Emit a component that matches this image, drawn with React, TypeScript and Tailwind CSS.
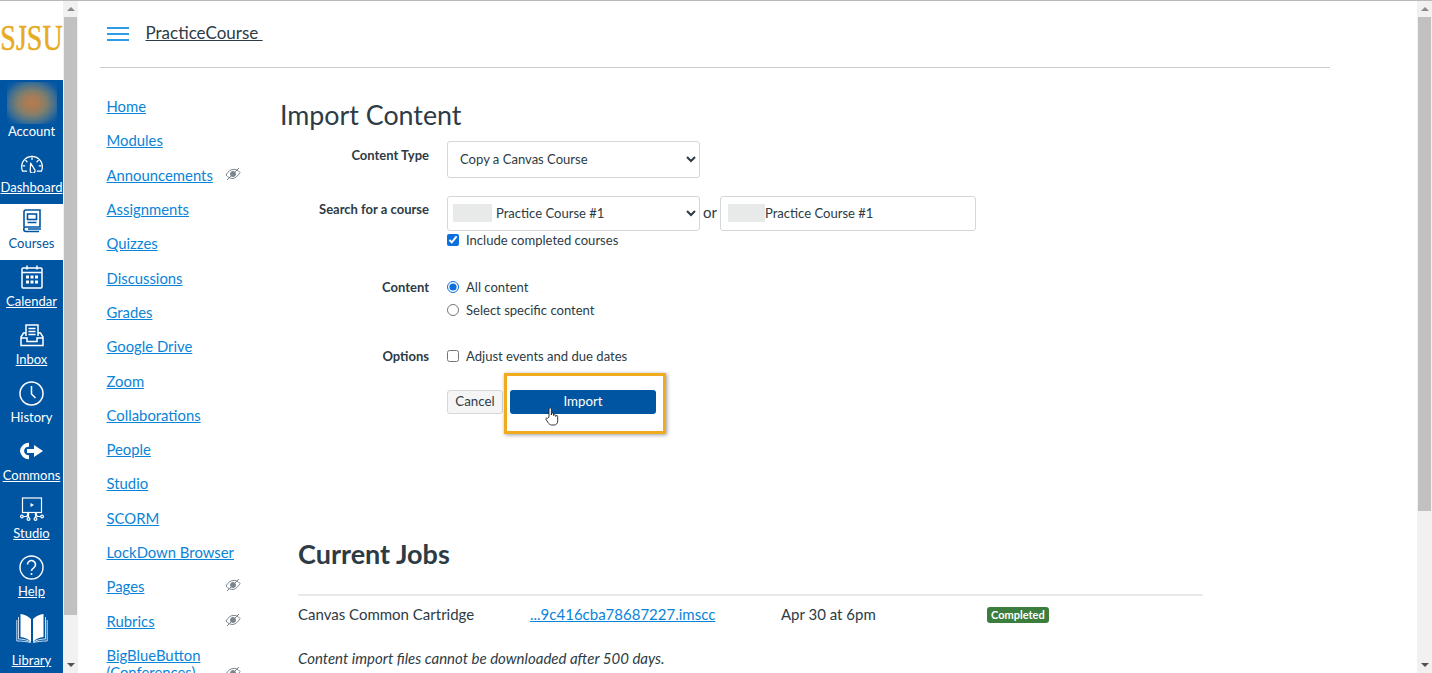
import React from "react";

const white = { stroke: "white", fill: "none", strokeWidth: 1.6, strokeLinecap: "round" as const, strokeLinejoin: "round" as const };

const icons: Record<string, React.ReactNode> = {
  dash: (
    <svg width="24" height="18" viewBox="0 0 26 20" {...white} strokeWidth={1.4}>
      <path d="M7 18H2.5A11 11 0 0 1 1.5 13 11.5 11.5 0 0 1 24.500 13 11 11 0 0 1 23.500 18H19" />
      <path d="M13 3v2M6 6l1.500 1.500M20 6l-1.500 1.500M3 12h2M21 12h2" />
      <path d="M11.500 9l4 6.500a2.700 2.700 0 1 1-4.500 2z" />
    </svg>
  ),
  courses: (
    <svg width="20" height="24" viewBox="0 0 20 24" fill="none" stroke="#0055a2" strokeWidth="1.600">
      <path d="M2 18V3a2 2 0 0 1 2-2h14v17H4a2 2 0 0 0 0 4.500h13" />
      <rect x="5.500" y="5" width="9" height="5.500" />
      <path d="M5.500 13.500h9M6 20h13" />
    </svg>
  ),
  calendar: (
    <svg width="22" height="24" viewBox="0 0 22 24" fill="none" stroke="white" strokeWidth="1.500">
      <rect x="1" y="3" width="20" height="20" rx="1" />
      <path d="M1 7.500h20M6 .5v4M16 .5v4" />
      <path d="M5 10.500h3v3H5zM9.500 10.500h3v3h-3zM14 10.500h3v3h-3zM5 15.500h3v3H5zM9.500 15.500h3v3h-3zM14 15.500h3v3h-3z" fill="white" stroke="none" />
    </svg>
  ),
  inbox: (
    <svg width="24" height="23" viewBox="0 0 24 23" fill="none" stroke="white" strokeWidth="1.500">
      <path d="M6 12V1h12v11" />
      <path d="M8.500 4.500h7M8.500 7.500h7M8.500 10.500h7" />
      <path d="M6 9H3.500L1 13v8.500h22V13l-2.500-4H18" />
      <path d="M1 14h6v3.500h10V14h6" />
    </svg>
  ),
  history: (
    <svg width="25" height="25" viewBox="0 0 25 25" fill="none" stroke="white" strokeWidth="1.500">
      <circle cx="12.500" cy="12.500" r="11.500" />
      <path d="M12.500 5v8l4 4" />
    </svg>
  ),
  commons: (
    <svg width="25" height="18" viewBox="0 0 25 18">
      <path d="M15 9H8" stroke="white" strokeWidth="4" />
      <path d="M10 2.800A7 7 0 0 0 3 9a7 7 0 0 0 7 6.200" stroke="white" strokeWidth="4" fill="none" />
      <path d="M15 3l9 6-9 6z" fill="white" />
    </svg>
  ),
  studio: (
    <svg width="24" height="25" viewBox="0 0 24 25" fill="none" stroke="white" strokeWidth="1.200">
      <rect x="2.500" y="1" width="19" height="14.500" />
      <path d="M10.500 6l3.500 2-3.500 2z" fill="white" stroke="none" />
      <path d="M3.200 19.500H7l1-4M20.800 19.500H17l-1-4M8.500 15.500v5.200M15.500 15.500v5.200" />
      <circle cx="1.900" cy="19.500" r="1.300" />
      <circle cx="22.100" cy="19.500" r="1.300" />
      <circle cx="8.500" cy="22" r="1.400" />
      <circle cx="15.500" cy="22" r="1.400" />
    </svg>
  ),
  help: (
    <svg width="25" height="25" viewBox="0 0 25 25" fill="none" stroke="white" strokeWidth="1.400">
      <circle cx="12.500" cy="12.500" r="11.500" />
      <path d="M8.500 9.500a4 4 0 1 1 6.500 3.200c-1.500 1-2.500 1.800-2.500 3.300" strokeWidth="1.600" />
      <circle cx="12.500" cy="19" r="1" fill="white" stroke="none" />
    </svg>
  ),
  library: (
    <svg width="32" height="30" viewBox="0 0 32 30">
      <path d="M15 6C12 3 8 1.500 4.500 1v23c4 .5 8 2 10.500 5zM17 6c3-3 7-4.500 10.500-5v23c-4 .5-8 2-10.500 5z" fill="white" />
      <path d="M2.500 4v22c4.500 0 9 1 12 3M29.500 4v22c-4.500 0-9 1-12 3M.8 7v21c5 0 10 .5 14 1.500M31.200 7v21c-5 0-10 .5-14 1.500" stroke="white" strokeWidth="0.800" fill="none" />
    </svg>
  ),
};

function NavItem({ icon, label, link, h = "h-[58px]", gap = "mt-[2px]", active }: { icon: string; label: string; link?: boolean; h?: string; gap?: string; active?: boolean }) {
  return (
    <div className={`${h} flex shrink-0 flex-col items-center justify-end pb-[9px] ${active ? "bg-white text-[#0055a2]" : "text-white"}`}>
      <div className="flex h-[28px] items-center justify-center">{icons[icon]}</div>
      <span className={`${gap} text-[13px] leading-[16px] whitespace-nowrap ${link ? "underline" : ""}`}>{label}</span>
    </div>
  );
}

function EyeOff() {
  return (
    <svg width="16" height="14" viewBox="0 0 16 14" fill="none" stroke="#7b858c" strokeWidth="1" className="shrink-0">
      <path d="M1 8c2-3.500 4.500-5.500 7-5.500 2.500-.5 5 .5 7 3-2 3.500-4.500 5.500-7 6-2.500 0-5-1-7-3.500z" />
      <circle cx="8" cy="7" r="2.500" fill="#7b858c" />
      <path d="M2 13L14 1" />
    </svg>
  );
}

function Scrollbar({ thumb }: { thumb: string }) {
  return (
    <div className="flex h-full w-[15px] shrink-0 flex-col items-center bg-[#f1f1f1]">
      <div className="flex h-[16px] w-full items-center justify-center">
        <div className="h-0 w-0 border-x-[4px] border-b-[4px] border-x-transparent border-b-[#8a8a8a]" />
      </div>
      <div className={`${thumb} w-[13px] bg-[#c1c1c1]`} />
      <div className="flex-1" />
      <div className="flex h-[16px] w-full items-center justify-center">
        <div className="h-0 w-0 border-x-[4px] border-t-[4px] border-x-transparent border-t-[#505050]" />
      </div>
    </div>
  );
}

const links: [string, boolean?][] = [
  ["Home"],
  ["Modules"],
  ["Announcements", true],
  ["Assignments"],
  ["Quizzes"],
  ["Discussions"],
  ["Grades"],
  ["Google Drive"],
  ["Zoom"],
  ["Collaborations"],
  ["People"],
  ["Studio"],
  ["SCORM"],
  ["LockDown Browser"],
  ["Pages", true],
  ["Rubrics", true],
  ["BigBlueButton (Conferences)", true],
];

export default function App() {
  return (
    <div className="flex h-[673px] w-[1432px] overflow-hidden border-t border-[#b9b9b9] bg-white font-['Lato','Noto_Sans',sans-serif] text-[#2d3b45]">
      <nav className="flex h-full w-[63px] shrink-0 flex-col overflow-hidden">
        <div className="flex h-[79px] shrink-0 items-center justify-center font-['Liberation_Serif',serif] text-[28px] leading-none text-[#e6ab24]">
          <span className="mb-[3px] scale-y-125 whitespace-nowrap [-webkit-text-stroke:0.4px_#e6ab24]">SJSU</span>
        </div>
        <div className="flex flex-1 flex-col overflow-hidden bg-[#0055a2]">
          <div className="flex h-[66px] shrink-0 flex-col items-center text-white">
            <div className="mt-[2px] h-[42px] w-[50px] bg-[radial-gradient(ellipse_at_center,#b87a50_0%,#a37c5a_22%,#7f7e6c_42%,#3f6f92_66%,#0e5aa3_84%,#0055a2_100%)]" />
            <span className="mt-[-1px] text-[13px] leading-[16px]">Account</span>
          </div>
          <NavItem icon="dash" label="Dashboard" link gap="mt-[1px]" />
          <NavItem icon="courses" label="Courses" active h="h-[56px]" gap="mt-0" />
          <NavItem icon="calendar" label="Calendar" link />
          <NavItem icon="inbox" label="Inbox" link />
          <NavItem icon="history" label="History" />
          <NavItem icon="commons" label="Commons" link />
          <NavItem icon="studio" label="Studio" link />
          <NavItem icon="help" label="Help" link />
          <NavItem icon="library" label="Library" link h="h-[69px]" gap="mt-[10px]" />
        </div>
      </nav>
      <Scrollbar thumb="h-[598px]" />

      <main className="min-w-0 flex-1 overflow-hidden">
        <header className="ml-[22px] flex h-[67px] w-[1230px] items-start border-b border-[#c7cdd1] pl-[7px] pt-[20px]">
          <div className="mt-[6px] flex h-[14px] w-[22px] flex-col justify-between">
            <div className="h-[2px] bg-[#2d9be6]" />
            <div className="h-[2px] bg-[#2d9be6]" />
            <div className="h-[2px] bg-[#2d9be6]" />
          </div>
          <a className="ml-[16.500px] text-[17px] leading-[24px] whitespace-pre underline">PracticeCourse </a>
        </header>

        <div className="flex pl-[28.500px]">
          <aside className="w-[173.500px] shrink-0 pt-[30px]">
            <ul className="flex w-[134.500px] flex-col gap-[17.320px]">
              {links.map(([name, hidden]) => (
                <li key={name} className="flex items-end justify-between gap-1 text-[14.850px] leading-[17px] text-[#0a84d8]">
                  <a className="underline">{name}</a>
                  {hidden && <span className={name.startsWith("Big") ? "mb-[1px]" : "mb-[3px]"}><EyeOff /></span>}
                </li>
              ))}
            </ul>
          </aside>

          <section className="min-w-0 flex-1 pt-[31px]">
            <h1 className="text-[26.800px] leading-[33px]">Import Content</h1>

            <form className="mt-[9px] text-[13.050px] leading-[18px]">
              <div className="flex">
                <label className="w-[149px] pt-[5px] text-right text-[13px] font-bold">Content Type</label>
                <select className="ml-[18px] h-[37px] w-[253px] rounded-[3px] border border-[#d4d7d9] bg-white pb-[2px] pl-[8px] text-[13.050px]">
                  <option>Copy a Canvas Course</option>
                </select>
              </div>

              <div className="mt-[18px] flex">
                <label className="w-[149px] pt-[4px] text-right text-[13px] font-bold">Search for a course</label>
                <div className="relative ml-[18px] w-[253px]">
                  <select className="h-[35px] w-full rounded-[3px] border border-[#d4d7d9] bg-white pb-[2px] pl-[44px] text-[13.050px]">
                    <option>Practice Course #1</option>
                  </select>
                  <div className="pointer-events-none absolute left-[6px] top-[8px] h-[18px] w-[39px] bg-[#e8e9e9]" />
                </div>
                <span className="ml-[3px] mt-[7px] w-[17px] text-[15px]">or</span>
                <div className="relative">
                  <input
                    readOnly
                    value="Practice Course #1"
                    className="h-[35px] w-[256px] rounded-[3px] border border-[#d4d7d9] bg-white pb-[2px] pl-[44px] text-[13.050px] outline-none"
                  />
                  <div className="pointer-events-none absolute left-[8px] top-[8px] h-[18px] w-[37px] bg-[#e8e9e9]" />
                </div>
              </div>

              <label className="ml-[167px] flex h-[18px] items-center gap-[7px]">
                <input type="checkbox" defaultChecked className="h-[12px] w-[12px] accent-[#0b6fde]" />
                Include completed courses
              </label>

              <div className="mt-[29px] flex">
                <span className="w-[149px] text-right text-[13px] font-bold">Content</span>
                <div className="ml-[18px] flex flex-col gap-[5px]">
                  <label className="flex items-center gap-[7px]">
                    <input type="radio" name="c" defaultChecked className="h-[12px] w-[12px] accent-[#0b6fde]" />
                    All content
                  </label>
                  <label className="flex items-center gap-[7px]">
                    <input type="radio" name="c" className="h-[12px] w-[12px]" />
                    Select specific content
                  </label>
                </div>
              </div>

              <div className="mt-[28px] flex">
                <span className="w-[149px] text-right text-[13px] font-bold">Options</span>
                <label className="ml-[18px] flex items-center gap-[7px]">
                  <input type="checkbox" className="h-[12px] w-[12px]" />
                  Adjust events and due dates
                </label>
              </div>

              <div className="ml-[167px] mt-[25px] flex gap-[7px]">
                <button type="button" className="h-[24px] w-[56px] rounded-[3px] border border-[#d4d7d9] bg-[#f5f5f5] pb-[2px] text-[13.300px]">
                  Cancel
                </button>
                <div className="relative">
                  <button type="button" className="h-[24px] w-[146px] rounded-[3px] bg-[#0055a2] pb-[2px] text-[13.300px] text-white">
                    Import
                  </button>
                  <div className="pointer-events-none absolute -left-[6px] -top-[17px] h-[61px] w-[162px] border-[3px] border-[#f0ab1f] shadow-[1px_1px_4px_rgba(0,0,0,0.4)]" />
                  <svg width="14" height="19" viewBox="0 0 14 19" className="absolute left-[35px] top-[17px]" fill="white" stroke="#222" strokeWidth="0.900">
                    <path d="M4 10V2a1.200 1.200 0 0 1 2.400 0v6V7a1.100 1.100 0 0 1 2.200 0v1.500a1.100 1.100 0 0 1 2.100 0v1a1 1 0 0 1 2 0V14c0 2.500-1.500 4-3.500 4H6.500C5 18 4 17 3 15.500L1 12.500c-.6-1 .6-2 1.500-1.200z" />
                  </svg>
                </div>
              </div>
            </form>

            <div className="ml-[18px] mt-[123px] w-[905px]">
              <h2 className="border-b-2 border-[#e8eaec] pb-[23px] text-[27px] font-bold leading-[34px]">Current Jobs</h2>
              <div className="mt-[8px] flex h-[20px] items-center text-[15px]">
                <span className="w-[232px]">Canvas Common Cartridge</span>
                <a className="w-[251px] text-[#0a84d8] underline">...9c416cba78687227.imscc</a>
                <span className="w-[206px]">Apr 30 at 6pm</span>
                <span className="mt-[2px] rounded-[3px] bg-[#3a7d3c] px-[4px] text-[11px] font-bold leading-[16px] text-white">Completed</span>
              </div>
              <p className="mt-[25px] text-[15px] italic leading-[18px]">Content import files cannot be downloaded after 500 days.</p>
            </div>
          </section>
        </div>
      </main>
      <Scrollbar thumb="h-[494px]" />
    </div>
  );
}
